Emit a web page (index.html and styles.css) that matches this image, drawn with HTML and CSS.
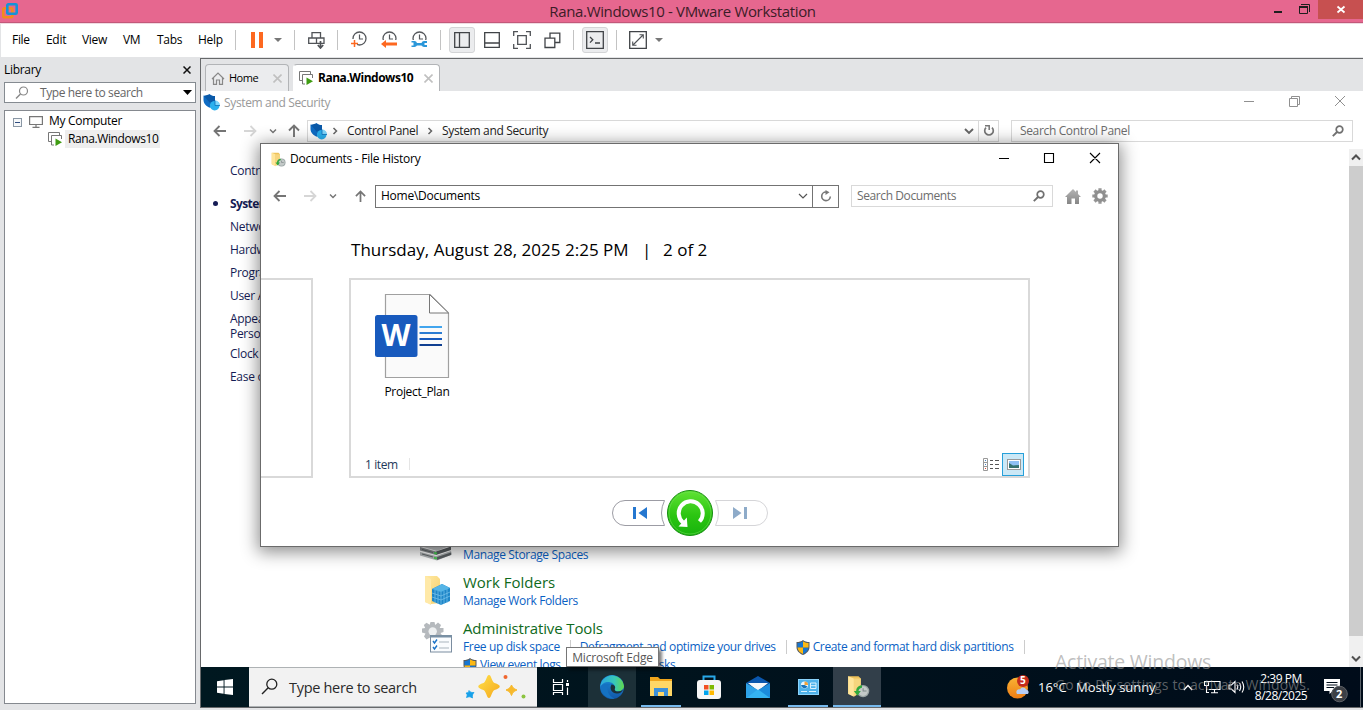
FILE: index.html
```html
<!DOCTYPE html>
<html lang="en">
<head>
<meta charset="utf-8">
<title>Rana.Windows10 - VMware Workstation</title>
<link rel="stylesheet" href="styles.css">
</head>
<body>
<svg class="defs" width="0" height="0">
  <defs>
    <linearGradient id="gGreen" x1="0" y1="0" x2="0" y2="1"><stop offset="0" stop-color="#5fe333"/><stop offset=".55" stop-color="#2cc512"/><stop offset="1" stop-color="#17b30c"/></linearGradient>
    <linearGradient id="gFolder" x1="0" y1="0" x2="1" y2="1"><stop offset="0" stop-color="#ffe9a3"/><stop offset="1" stop-color="#f7cf6a"/></linearGradient>
    <linearGradient id="gGrey" x1="0" y1="0" x2="0" y2="1"><stop offset="0" stop-color="#b4b4b4"/><stop offset="1" stop-color="#868686"/></linearGradient>
    <linearGradient id="gEdgeA" x1="0" y1="0" x2="1" y2="0"><stop offset="0" stop-color="#2aa7e0"/><stop offset=".6" stop-color="#38c8b8"/><stop offset="1" stop-color="#62d84a"/></linearGradient>
    <linearGradient id="gEdgeB" x1="0" y1="0" x2="0" y2="1"><stop offset="0" stop-color="#1b8fdc"/><stop offset="1" stop-color="#1257a8"/></linearGradient>
    <linearGradient id="gStar" x1="0" y1="0" x2="1" y2="1"><stop offset="0" stop-color="#ffe04a"/><stop offset="1" stop-color="#f5a81c"/></linearGradient>
    <linearGradient id="gSun" x1="0" y1="0" x2="0" y2="1"><stop offset="0" stop-color="#f9b233"/><stop offset="1" stop-color="#ee7d16"/></linearGradient>
    <symbol id="vmshield" viewBox="0 0 17 17"><path d="M0.500 1.500C3 2 5 1.500 6.500 0.200C8 1.500 9.500 2 12 2V7C12 10.500 9.500 12.800 7 13.800C3.500 12.500.5 9.500.5 6Z" fill="#0f6cc4"/><path d="M6.500.2C8 1.500 9.500 2 12 2V7C12 9 11 11 9.500 12L1 2Z" fill="#0a59a8"/><circle cx="11.700" cy="11.700" r="4.800" fill="#2ab0ee"/><path d="M12 11.500V6.500A5 5 0 0 1 17 11.500Z" fill="#7fd6fb"/><path d="M12 11.500H17M12 11.500V6.500" stroke="#0d6fb9" stroke-width=".8"/></symbol>
    <symbol id="uac" viewBox="0 0 14 15"><path d="M7 0C8.500 1.500 11 2 13.500 2V7C13.500 11 10.500 13.500 7 15C3.500 13.500.5 11 .5 7V2C3 2 5.500 1.500 7 0Z" fill="#555b62"/><path d="M7 1.200V7.500H1.500V3C4 3 5.500 2.400 7 1.200ZM7 7.500H12.500C12.300 10.500 10 12.700 7 14Z" fill="#1776d1"/><path d="M7 1.200C8.500 2.400 10 3 12.500 3V7.500H7ZM1.500 7.500H7V14C4 12.700 1.700 10.500 1.500 7.500Z" fill="#fdb913"/></symbol>
    <symbol id="vmpages" viewBox="0 0 14 14"><path d="M3 9.500H.5V.5H11.500V3M6 13H3.500V3.500H13.500V7" fill="none" stroke="#777"/><path d="M7.500 6.500L14 10.200L7.500 14Z" fill="#3f9c12"/></symbol>
    <symbol id="back" viewBox="0 0 14 12"><path d="M13 6H1.500M6.500 1L1.500 6L6.500 11" fill="none" stroke="currentColor" stroke-width="1.800"/></symbol>
    <symbol id="fwd" viewBox="0 0 14 12"><path d="M1 6H12.500M7.500 1L12.500 6L7.500 11" fill="none" stroke="currentColor" stroke-width="1.800"/></symbol>
    <symbol id="up" viewBox="0 0 12 14"><path d="M6 13V2M1 6.500L6 1.500L11 6.500" fill="none" stroke="currentColor" stroke-width="1.900"/></symbol>
    <symbol id="chev" viewBox="0 0 10 8"><path d="M1 2L5 6L9 2" fill="none" stroke="currentColor" stroke-width="1.900"/></symbol>
    <symbol id="crumb" viewBox="0 0 6 8"><path d="M1.500 1L4.500 4L1.500 7" fill="none" stroke="currentColor" stroke-width="1.500"/></symbol>
    <symbol id="lens" viewBox="0 0 12 12"><circle cx="7.500" cy="4.500" r="3.300" fill="none" stroke="#707070" stroke-width="1.700"/><path d="M5 7L.8 11.200" stroke="#707070" stroke-width="1.900"/></symbol>
    <symbol id="reload" viewBox="0 0 12 12"><path d="M3 2.600A4.300 4.300 0 1 0 9 2.600" fill="none" stroke="#777" stroke-width="1.700"/><path d="M2 .8H6.200V5" fill="none" stroke="#777" stroke-width="1.500"/></symbol>
    <symbol id="fhist" viewBox="0 0 20 20"><path d="M1 1H10L12 3V16L5 18L1 16Z" fill="#eec25a"/><path d="M1 1L6 3V19L1 16.500Z" fill="#ffe59a"/><path d="M6 3H12V15L6 19Z" fill="#f6d57e"/><circle cx="14" cy="14" r="5.400" fill="#9aa5a5"/><circle cx="14" cy="14" r="4.200" fill="#c3c9c8"/><path d="M14 11.500V14H17" fill="none" stroke="#7d8888" stroke-width=".9"/><path d="M13 9C9 9.500 8 12 8 14H6L9 18L12 14H10C10 12.500 11 11.500 13 11Z" fill="#2fa83c"/></symbol>
    <symbol id="tclock" viewBox="0 0 18 18"><circle cx="9.500" cy="7.500" r="6.500" fill="none" stroke="#55585c" stroke-width="1.300"/><path d="M9.500 3.500V8H13" fill="none" stroke="#55585c" stroke-width="1.200"/></symbol>
  </defs>
</svg>

<header class="titlebar">
  <svg class="logo" width="16" height="16" viewBox="0 0 16 16"><rect x="1.300" y="5.300" width="9" height="9" rx="1" fill="none" stroke="#f28c1c" stroke-width="2.600"/><rect x="5.300" y="1.300" width="9.400" height="9.400" rx="1" fill="none" stroke="#1593d6" stroke-width="2.600"/></svg>
  <span class="app-title">Rana.Windows10 - VMware Workstation</span>
  <div class="app-controls">
    <svg width="90" height="19" viewBox="0 0 90 19"><rect x="1" y="11" width="8" height="2" fill="#1e1e1e"/><path d="M26.500 7V13.500H34.500V6.500M28 4.500H36.500V12" fill="none" stroke="#1e1e1e"/><rect x="26" y="6" width="9" height="2" fill="#1e1e1e"/><rect x="45" width="45" height="19" fill="#c75050"/><path d="M64.500 6.500L71.500 12.500M71.500 6.500L64.500 12.500" stroke="#fff" stroke-width="1.800"/></svg>
  </div>
</header>

<nav class="menubar">
  <span>File</span><span>Edit</span><span>View</span><span>VM</span><span>Tabs</span><span>Help</span>
  <div class="toolbar">
    <i class="sep first"></i>
    <svg width="12" height="16"><path d="M0 0H4V16H0ZM8 0H12V16H8Z" fill="#fd6820"/></svg>
    <svg width="8" height="4"><path d="M0 0H8L4 4Z" fill="#777"/></svg>
    <i class="sep"></i>
    <svg width="17" height="17" viewBox="0 0 17 17"><path d="M4 .7H12.500V6H4ZM.7 6H8.500V11.300H.7ZM8.500 6H16V11.300H8.500Z" fill="none" stroke="#505357" stroke-width="1.300"/><path d="M12.500 9V16M9.800 13L12.500 16L15.200 13" fill="none" stroke="#505357" stroke-width="1.700"/></svg>
    <i class="sep"></i>
    <svg width="18" height="18"><use href="#tclock"/><rect x="0" y="8" width="7" height="8" fill="#fff"/><path d="M4.500 9V16M1 12.500H8" stroke="#fd6820" stroke-width="1.500"/></svg>
    <svg width="18" height="18"><use href="#tclock"/><rect x="0" y="9" width="18" height="8" fill="#fff"/><path d="M1 13L6 9V11.500H17V14.500H6V17Z" fill="#fd6820"/></svg>
    <svg width="18" height="18"><use href="#tclock"/><rect x="0" y="9" width="18" height="8" fill="#fff"/><path d="M1.500 10H4.500A3 3 0 0 1 7 12H11.500A3 3 0 0 1 14 10H17V12H14.500V14H17V16H14A3 3 0 0 1 11.500 14.500H7A3 3 0 0 1 4.500 16H1.500V14.500H3.500V11.500H1.500Z" fill="#2b97d9"/></svg>
    <i class="sep"></i>
    <span class="pressed"><svg width="16" height="16"><path d="M.7.700H15.300V15.300H.7ZM5.500.7V15.300" fill="none" stroke="#404347" stroke-width="1.300"/></svg></span>
    <svg width="16" height="16"><path d="M.7.700H15.300V15.300H.7ZM.7 11H15.300" fill="none" stroke="#404347" stroke-width="1.300"/></svg>
    <svg width="18" height="18"><path d="M.7 5V.7H5M13 .7H17.300V5M17.300 13V17.300H13M5 17.300H.7V13M4.700 4.700H13.300V13.300H4.700Z" fill="none" stroke="#505357" stroke-width="1.300"/></svg>
    <svg width="17" height="17"><path d="M6 6V1.200H15.800V10.500H11M1 6.200H10.800V15.500H1Z" fill="none" stroke="#404347" stroke-width="1.300"/></svg>
    <i class="sep"></i>
    <span class="pressed"><svg width="18" height="18"><path d="M.7.700H17.300V17.300H.7Z" fill="none" stroke="#404347" stroke-width="1.300"/><path d="M4 6L6.800 8.800L4 11.600M9 12H14" fill="none" stroke="#404347" stroke-width="1.300"/></svg></span>
    <i class="sep"></i>
    <svg width="18" height="18"><path d="M.7.700H17.300V17.300H.7Z" fill="none" stroke="#404347" stroke-width="1.300"/><path d="M10.500 3.700H14.300V7.500M3.700 10.500V14.300H7.500M14 4L4 14" fill="none" stroke="#505357" stroke-width="1.100"/></svg>
    <svg width="8" height="4"><path d="M0 0H8L4 4Z" fill="#777"/></svg>
  </div>
</nav>

<div class="workspace">
  <aside class="library">
    <div class="lib-head"><span>Library</span><svg width="8" height="8"><path d="M.5.500L7.500 7.500M7.500.5L.5 7.500" stroke="#111" stroke-width="1.500"/></svg></div>
    <div class="lib-search"><svg width="14" height="14"><circle cx="8.500" cy="5" r="4" fill="none" stroke="#888" stroke-width="1.200"/><path d="M5.500 8L1 12.500" stroke="#888" stroke-width="1.400"/></svg><span>Type here to search</span><svg width="9" height="5"><path d="M0 0H9L4.500 5Z" fill="#000"/></svg></div>
    <div class="tree">
      <div class="node root"><svg width="9" height="9"><rect x=".5" y=".5" width="8" height="8" fill="#f5f7f9" stroke="#8a97a5"/><path d="M2 4.500H7" stroke="#2f4c80"/></svg><svg width="14" height="12"><path d="M.6.600H13.400V8.500H.6ZM7 8.500V11M3.500 11.300H10.500" fill="none" stroke="#777" stroke-width="1.200"/></svg><span>My Computer</span></div>
      <div class="node child"><svg width="14" height="14"><use href="#vmpages"/></svg><span class="picked">Rana.Windows10</span></div>
    </div>
  </aside>

  <section class="vm">
    <div class="tabs">
      <div class="tab home"><svg width="14" height="13"><path d="M1 7L7 1L13 7M2.500 6V12.300H5.500V8H8.500V12.300H11.500V6" fill="none" stroke="#888" stroke-width="1.200"/></svg><span>Home</span><svg width="9" height="9"><path d="M.5.500L8.500 8.500M8.500.5L.5 8.500" stroke="#c0c0c0" stroke-width="1.600"/></svg></div>
      <div class="tab current"><svg width="14" height="14"><use href="#vmpages"/></svg><span>Rana.Windows10</span><svg width="9" height="9"><path d="M.5.500L8.500 8.500M8.500.5L.5 8.500" stroke="#c0c0c0" stroke-width="1.600"/></svg></div>
    </div>

    <div class="guest">
      <div class="cp-title"><svg width="17" height="17"><use href="#vmshield"/></svg><span>System and Security</span>
        <svg class="cp-controls" width="104" height="12"><path d="M0 6.500H10M45.500 3.500H53.500V11.500H45.500ZM47.500 3V1.500H55.500V9.500H54M91 1L101 11M101 1L91 11" fill="none" stroke="#909090"/></svg>
      </div>
      <div class="cp-address">
        <div class="arrows"><svg width="14" height="12"><use href="#back"/></svg><svg class="dim" width="14" height="12"><use href="#fwd"/></svg><svg width="8" height="6"><use href="#chev"/></svg><svg width="12" height="14"><use href="#up"/></svg></div>
        <div class="cp-path"><svg width="17" height="17"><use href="#vmshield"/></svg><svg width="6" height="8"><use href="#crumb"/></svg><span class="p1">Control Panel</span><svg width="6" height="8"><use href="#crumb"/></svg><span class="p2">System and Security</span><svg class="drop" width="10" height="8"><use href="#chev"/></svg></div>
        <div class="cp-reload"><svg width="12" height="12"><use href="#reload"/></svg></div>
        <div class="cp-search"><span>Search Control Panel</span><svg width="12" height="12"><use href="#lens"/></svg></div>
      </div>
      <div class="cp-body">
        <ul class="cp-nav">
          <li class="top">Control Panel Home</li>
          <li class="here">System and Security</li>
          <li>Network and Internet</li>
          <li>Hardware and Sound</li>
          <li>Programs</li>
          <li>User Accounts</li>
          <li class="two">Appearance and<br>Personalization</li>
          <li>Clock and Region</li>
          <li>Ease of Access</li>
        </ul>
        <div class="cp-main">
          <div class="cat storage">
            <svg width="32" height="20" viewBox="0 0 32 20"><path d="M0 5L14 0L32 4L17 10Z" fill="#c3c6c8"/><path d="M0 6L16 10.500V14L0 9.500Z" fill="#8d9194"/><path d="M16 10.500L31 5.500V9L16 14Z" fill="#5a5f62"/><path d="M0 11L16 15L31 10L32 13.500L17 19.500L0 14.500Z" fill="#b1b5b7"/><path d="M17 16L31 11.500V14L17 19Z" fill="#5b6063"/><path d="M2 13L13 16M2 8.500L13 11.500" stroke="#63686b"/><path d="M14 12L17 12.500M14 16.800L17 17.500" stroke="#47c952" stroke-width="2"/></svg>
            <div><a>Manage Storage Spaces</a></div>
          </div>
          <div class="cat work">
            <svg width="28" height="32" viewBox="0 0 28 32"><path d="M1 1H13L16 4V28L7 29L1 27Z" fill="url(#gFolder)"/><path d="M1 1L7 4V30L1 27Z" fill="#ffe9a8"/><path d="M8 14L18 9L26 13V26L17 30L8 26Z" fill="#1e86c8"/><path d="M8 14L18 9L26 13L17 17Z" fill="#55b4e6"/><path d="M8 18L17 21L26 17M8 22L17 25L26 21M11 15V28M14 16V29M17 17V30M20 16V29M23 14V28" stroke="#7cc6ee" stroke-width=".7" fill="none"/></svg>
            <div><h3>Work Folders</h3><a>Manage Work Folders</a></div>
          </div>
          <div class="cat admin">
            <svg width="32" height="32" viewBox="0 0 32 32"><path d="M9.500 1H13.500L14.200 4L17 1.500L20 4L18.700 7H22.500V11L19.500 12L21.500 15L19 18L15.500 16.500L14.500 20H10L9 16.500L5.500 18.500L3 15.500L4.500 12.500L1 11.500V7.500L4.200 7L2.800 4L5.500 1.700L8.700 3.800Z" fill="#b5b9bd"/><circle cx="11.700" cy="10.500" r="4.200" fill="#eef0f1"/><rect x="9.500" y="14.500" width="21" height="16.500" fill="#fafcfe" stroke="#7b8da0"/><path d="M9 15.500H31" stroke="#7990a5" stroke-width="2"/><path d="M12 20L13.500 22L16 18.500M12 26L13.500 28L16 24.500" fill="none" stroke="#1b73c8" stroke-width="1.400"/><path d="M18 21H28M18 27H28" stroke="#a9b4bd"/></svg>
            <div><h3 class="long">Administrative Tools</h3>
              <p class="links"><a>Free up disk space</a><i></i><a>Defragment and optimize your drives</a><i></i><svg width="14" height="15"><use href="#uac"/></svg><a>Create and format hard disk partitions</a><i></i></p>
              <p class="links"><svg width="14" height="15"><use href="#uac"/></svg><a>View event logs</a><i></i><svg width="14" height="15"><use href="#uac"/></svg><a>Schedule tasks</a></p>
            </div>
          </div>
        </div>
        <div class="scroll"><svg width="14" height="17"><path d="M3 10.500L7 6.500L11 10.500" fill="none" stroke="#505050" stroke-width="2"/></svg><div class="thumb"></div><svg width="14" height="17"><path d="M3 6.500L7 10.500L11 6.500" fill="none" stroke="#505050" stroke-width="2"/></svg></div>
      </div>

      <div class="taskbar">
        <div class="start"><svg width="16" height="16"><path d="M0 2.200L6.600 1.200V7.500H0ZM7.500 1.100L16 0V7.500H7.500ZM0 8.500H6.600V14.800L0 13.800ZM7.500 8.500H16V16L7.500 14.900Z" fill="#fff"/></svg></div>
        <div class="tb-search">
          <svg width="18" height="18"><circle cx="10.800" cy="6.200" r="5" fill="none" stroke="#222" stroke-width="1.300"/><path d="M7.200 9.800L1 16" stroke="#222" stroke-width="1.400"/></svg><span>Type here to search</span>
          <svg width="62" height="28" viewBox="0 0 62 28"><path d="M24 2C26.500 2 26.500 8.500 29.500 10C36.500 12 36.500 15 29.500 17C26.500 18.500 26.500 25 24 25C21.500 25 21.500 18.500 18.500 17C11.500 15 11.500 12 18.500 10C21.500 8.500 21.500 2 24 2Z" fill="url(#gStar)"/><path d="M46.500 12C48 15 48.500 15.500 52 17C48.500 18.500 48 19 46.500 22.500C45 19 44.500 18.500 41 17C44.500 15.500 45 15 46.500 12Z" fill="#f7b92c" stroke="#f7b92c"/><path d="M4 17.500C5.500 19.500 6 19.500 9 19.500C7.500 21.500 7 22 7.500 25C5 23.500 4 23.500 1.500 24.500C2.500 22 2.500 21.500 1 20C3.500 19.800 3.500 19.500 4 17.500Z" fill="#17a1ea" stroke="#17a1ea" stroke-width=".8"/><circle cx="40.500" cy="4" r="2" fill="#f0662e"/><circle cx="58.500" cy="23.500" r="2" fill="#8bc43f"/></svg>
        </div>
        <div class="tview"><svg width="18" height="16"><path d="M1.500 0V3.500H10.500V0M1.500 5.500H10.500V11.500H1.500ZM1.500 16V13.500H10.500V16M15.500 1V3M15.500 8.500V16" fill="none" stroke="#fff" stroke-width="1.200"/><rect x="14" y="4" width="3" height="3" fill="#fff"/></svg></div>
        <div class="task hot"><svg width="24" height="24" viewBox="0 0 24 24"><circle cx="12" cy="12" r="12" fill="url(#gEdgeB)"/><path d="M1 8A12 12 0 0 1 24 11C24 15 20 17 16 16C14 15.500 14.500 14 15 13C15.500 9 11 6.500 7 7C4 7.500 2 9 .3 12Z" fill="url(#gEdgeA)"/><path d="M15.200 13C14 14.500 14.800 16.500 18 16.500C20 16.500 22 15.500 23 14.500C22 17 20 18.500 17 18.500C12 18.500 9 14 11.500 9.500C13.500 9.500 15.500 11 15.200 13Z" fill="#1c3038"/><path d="M9 10C6 14 8 21 14.500 23.500C8 25 1 19 .3 12C2 8.500 8 8 11.500 9.500Z" fill="#1572c2"/></svg></div>
        <div class="task open"><svg width="22" height="20" viewBox="0 0 22 20"><path d="M0 0H8L10 2H22V19H0Z" fill="#f0a51c"/><path d="M0 4H22V19H0Z" fill="#ffd766"/><path d="M4 11H18V19H14V15H8V19H4Z" fill="#3d90d8"/></svg></div>
        <div class="task store"><svg width="24" height="24" viewBox="0 0 24 24"><path d="M6.500 7V1.500H17.500V7" fill="none" stroke="#28a8e8" stroke-width="2"/><rect y="5" width="24" height="19" rx="3" fill="#f6f6f6"/><path d="M7 10H11.500V14.500H7Z" fill="#f25022"/><path d="M12.500 10H17V14.500H12.500Z" fill="#7fba00"/><path d="M7 15.500H11.500V20H7Z" fill="#00a4ef"/><path d="M12.500 15.500H17V20H12.500Z" fill="#ffb900"/></svg></div>
        <div class="task mail"><svg width="24" height="22" viewBox="0 0 24 22"><path d="M0 7L12 0L24 7L12 14Z" fill="#0a57ae"/><path d="M2 7H22L12 15Z" fill="#f5f8fb"/><path d="M0 7L12 14L24 22H0Z" fill="#2ea2e8"/><path d="M24 7V22H0L12 14Z" fill="#1b8bdc"/><path d="M0 22L11 14H13L24 22Z" fill="#35b3f2"/></svg></div>
        <div class="task open cp"><svg width="21" height="16" viewBox="0 0 21 16"><rect x=".5" y=".5" width="20" height="15" fill="#4fb2ea" stroke="#8ad3fb"/><circle cx="6.500" cy="6" r="3.600" fill="#e9f6fd"/><path d="M6.500 6V2.400A3.600 3.600 0 0 1 10.100 6Z" fill="#f2a23a"/><path d="M3 6A3.500 3.500 0 0 0 9.500 7.500L6.500 6Z" fill="#1674bd"/><path d="M12.500 4H18V9.500H12.500ZM13 6.700H18M3 12.500H9M11 12.500H18" fill="none" stroke="#d9f1fe" stroke-width="1"/></svg></div>
        <div class="task active"><svg width="23" height="23"><use href="#fhist"/></svg></div>
        <div class="weather"><svg width="24" height="24" viewBox="0 0 24 24"><circle cx="10.500" cy="13" r="10.500" fill="url(#gSun)"/><path d="M10 19C8 16 11 13.500 13 14.500C14 11.500 18.500 12 19 14.500C22 14.500 22.500 19 20 19Z" fill="#b5cdf5"/><circle cx="16" cy="6" r="6" fill="#c42b1c"/></svg><b>5</b><span class="deg">16°C</span><span class="sky">Mostly sunny</span></div>
        <div class="tray">
          <svg width="10" height="7"><path d="M.8 6L5 1.500L9.200 6" fill="none" stroke="#fff" stroke-width="1.300"/></svg>
          <svg width="17" height="14"><path d="M4.500 1.500H16V9.500H5M10.500 9.500V12.500M7 12.800H14M.5 1.500H4.500V5.500H.5ZM2.500 5.500V12.500H5" fill="none" stroke="#fff" stroke-width="1.100"/></svg>
          <svg width="17" height="14"><path d="M1 5H3.500L7 1.500V12.500L3.500 9H1ZM9 4.500Q10.500 7 9 9.500M11.500 3Q14 7 11.500 11M14 1.500Q17.500 7 14 12.500" fill="none" stroke="#fff" stroke-width="1.100"/></svg>
        </div>
        <div class="clock"><span>2:39 PM</span><span>8/28/2025</span></div>
        <div class="notes"><svg width="25" height="24"><path d="M0 0H16V12H9L5.500 15V12H0Z" fill="#fff"/><path d="M2.500 3.500H13.500M2.500 6H13.500M2.500 8.500H10" stroke="#000d1a" stroke-width="1.100"/><circle cx="15.500" cy="15" r="7.800" fill="#3c4046" stroke="#5c6066"/></svg><b>2</b></div>
        <i class="peek"></i>
      </div>

      <div class="dialog">
        <div class="dl-title"><svg width="15" height="15"><use href="#fhist"/></svg><span>Documents - File History</span>
          <svg class="dl-controls" width="104" height="12"><path d="M0 6.500H10M45.500 1.500H54.500V10.500H45.500ZM91 1L101 11M101 1L91 11" fill="none" stroke="#000" stroke-width="1.100"/></svg></div>
        <div class="dl-address">
          <div class="arrows"><svg width="14" height="12"><use href="#back"/></svg><svg class="dim" width="14" height="12"><use href="#fwd"/></svg><svg width="8" height="6"><use href="#chev"/></svg><svg width="11" height="13"><use href="#up"/></svg></div>
          <div class="dl-path"><span>Home\Documents</span><svg width="10" height="8"><path d="M1 2L5 6L9 2" fill="none" stroke="#555" stroke-width="1.200"/></svg></div>
          <div class="dl-reload"><svg width="12" height="12" viewBox="0 0 12 12"><path d="M6 2A4.300 4.300 0 1 0 10.300 6.500" fill="none" stroke="#777" stroke-width="1.600"/><path d="M5.500 0L9.500 2.300L5.500 5Z" fill="#777"/></svg></div>
          <div class="dl-search"><span>Search Documents</span><svg width="12" height="12"><use href="#lens"/></svg></div>
          <svg width="16" height="15" viewBox="0 0 16 15"><path d="M8 0L11 3V1.500H13V5L16 8H14V15H10V9.500H6.500V15H2V8H0Z" fill="url(#gGrey)"/></svg>
          <svg width="16" height="16" viewBox="0 0 16 16"><path d="M8 .3V15.700M.3 8H15.700M2.500 2.500L13.500 13.500M13.500 2.500L2.500 13.500" stroke="#969696" stroke-width="3.200"/><circle cx="8" cy="8" r="4.400" fill="none" stroke="#8f8f8f" stroke-width="3"/><circle cx="8" cy="8" r="2.700" fill="#fff"/></svg>
        </div>
        <div class="dl-date"><span class="d1">Thursday, August 28, 2025 2:25 PM</span><span class="bar">|</span><span class="d2">2 of 2</span></div>
        <div class="dl-panels">
          <div class="prev"></div>
          <div class="snapshot">
            <div class="file">
              <div class="doc"><svg width="75" height="84" viewBox="0 0 75 84"><path d="M10.500.5H55L73.500 19V83.500H10.500Z" fill="#fafafa" stroke="#a0a0a0" stroke-width="1.200"/><path d="M54.500.5V19H73.500Z" fill="#fff" stroke="#777"/><rect y="21" width="42.500" height="42" rx="2.500" fill="#185abd"/><path d="M44.500 33H67" stroke="#41a5ee" stroke-width="2"/><path d="M44.500 39H67" stroke="#2b7cd3" stroke-width="2"/><path d="M44.500 45H67" stroke="#185abd" stroke-width="2"/><path d="M44.500 51H67" stroke="#103f91" stroke-width="2"/></svg><b>W</b></div>
              <span>Project_Plan</span>
            </div>
            <div class="status"><span>1 item</span><i></i>
              <svg class="list" width="17" height="13"><path d="M.5.500H4.500V12.500H.5ZM.5 4.500H4.500M.5 8.500H4.500" fill="none" stroke="#999"/><path d="M7 2.500H10M12 2.500H16M7 6.500H10M12 6.500H16M7 10.500H10M12 10.500H16" stroke="#555"/><path d="M2 2.500H3M2 6.500H3" stroke="#4b82c0"/><path d="M2 10.500H3" stroke="#d43"/></svg>
              <div class="thumbs"><svg width="14" height="11"><rect x=".5" y=".5" width="13" height="10" fill="#fff" stroke="#999"/><rect x="2" y="2" width="10" height="7" fill="#8fc1f4"/><path d="M2 4L6 6.500L12 6V9H2Z" fill="#36736f"/></svg></div>
            </div>
          </div>
        </div>
        <div class="player"><svg width="156" height="46" viewBox="0 0 156 46"><path d="M52.500 10.500H13A12.500 12.500 0 0 0 13 35.500H52.500Q46.500 23 52.500 10.500Z" fill="#fff" stroke="#9c9ca4"/><path d="M103.500 10.500H143A12.500 12.500 0 0 1 143 35.500H103.500Q109.500 23 103.500 10.500Z" fill="#fff" stroke="#d5d5d8"/><path d="M21 17H24V29H21ZM35 17V29L26.500 23Z" fill="#2577d0"/><path d="M121 17V29L129.500 23ZM132 17H135V29H132Z" fill="#8eabc9"/><circle cx="78" cy="23" r="22.500" fill="url(#gGreen)" stroke="#168d10"/><circle cx="78" cy="23" r="21" fill="none" stroke="#6fdf55" stroke-opacity=".55"/><path d="M87.500 31.500A12 12 0 1 0 71 32.500" fill="none" stroke="#fff" stroke-width="4"/><path d="M66.500 36.500L75.500 37L74.800 27.500Z" fill="#fff"/></svg></div>
      </div>

      <div class="tooltip">Microsoft Edge</div>
      <div class="watermark"><p class="wm1">Activate Windows</p><p class="wm2">Go to PC settings to activate Windows.</p></div>
    </div>
  </section>
</div>
</body>
</html>
```
FILE: styles.css
```css
* { box-sizing: border-box; }
body { margin: 0; width: 1363px; height: 710px; overflow: hidden; display: flex; flex-direction: column; background: #e3e4e6; color: #000; font: 12px/16px "Open Sans", "Noto Sans", sans-serif; letter-spacing: -0.3px; }
svg { display: block; flex: none; }
span, a, h3, p { white-space: nowrap; }
p, h3, ul { margin: 0; padding: 0; }
.defs { position: absolute; }

.titlebar { height: 24px; flex: none; display: grid; grid-template-columns: 274px 1fr 272px; background: #e6678f; border-bottom: 1px solid #f0dbe2; box-shadow: inset 0 -1px #c2587a; }
.logo { margin: 3px 0 0 2px; }
.app-title { text-align: center; font-size: 15px; line-height: 23px; color: #3c1c27; letter-spacing: -0.35px; }
.app-controls { justify-self: end; }

.menubar { height: 34px; flex: none; margin-left: 1px; padding-left: 11px; display: grid; grid-template-columns: 34px 36px 41px 34px 41px 37px 1fr; align-items: center; background: #fff; border-bottom: 1px solid #e3e4e6; padding-bottom: 1px; }
.toolbar { display: grid; height: 32px; align-items: center; justify-items: center; grid-template-columns: 9px 26px 16px 17px 26px 17px 26px 34px 26px 17px 26px 34px 26px 34px 9px 34px 9px 34px 8px; }
.sep { width: 1px; height: 20px; background: #c3c3c3; }
.sep.first { justify-self: start; }
.pressed { width: 26px; height: 26px; display: grid; place-items: center; background: #ebecee; border: 1px solid #d3d4d6; border-radius: 3px; }

.workspace { flex: 1; display: grid; grid-template-columns: 200px 1fr; }
.library { padding: 4px 4px 6px 4px; display: flex; flex-direction: column; }
.lib-head { height: 19px; display: flex; justify-content: space-between; padding-right: 5px; line-height: 16px; }
.lib-head svg { margin-top: 4px; }
.lib-search { height: 21px; display: flex; align-items: center; border: 1px solid #858b91; background: #fff; margin-top: 1px; padding: 0 3px 0 10px; color: #666; letter-spacing: -0.4px; }
.lib-search span { margin-left: 11px; flex: 1; }
.tree { flex: 1; margin-top: 7px; border: 1px solid #85898f; background: #fff; padding: 1px 0 0 8px; }
.node { height: 18px; display: flex; align-items: center; }
.root svg { margin-top: 2px; }
.root svg + svg { margin: 1px 6px 0 7px; }
.child { padding-left: 35px; }
.picked { margin-left: 3px; padding: 1px 2px 1px 3px; background: #eee; letter-spacing: -0.4px; }

.vm { border: 1px solid #67696b; border-right: 0; height: 650px; display: flex; flex-direction: column; }
.tabs { height: 32px; flex: none; display: flex; align-items: flex-end; padding-left: 4px; gap: 4px; background: #e3e4e6; }
.tab { height: 27px; display: flex; align-items: center; border: 1px solid #b2b4b7; border-bottom: 0; border-radius: 4px 4px 0 0; }
.tab.home { width: 84px; padding: 0 6px 0 5px; background: #ebecee; font-size: 11px; letter-spacing: -0.5px; }
.tab.home span { margin: 0 auto 0 4px; }
.tab.current { width: 147px; padding: 0 6px 0 5px; background: #fff; font-weight: 700; border-left-color: #fff; letter-spacing: -0.48px; }
.tab.current span { margin: 0 auto 0 5px; }

.guest { position: relative; flex: 1; background: #fff; overflow: hidden; }
.cp-title { height: 25px; display: flex; align-items: center; padding: 0 15px 3px 2px; color: #999; letter-spacing: -0.35px; }
.cp-title span { margin: 2px 0 0 4px; }
.cp-controls { margin-left: auto; margin-top: -3px; }
.cp-address { height: 30px; display: flex; align-items: center; padding-left: 12px; }
.arrows { display: grid; align-items: center; justify-items: center; color: #757575; }
.arrows .dim { color: #d6d6d6; }
.cp-address .arrows { grid-template-columns: 14px 46px 0 42px; width: 94px; }
.cp-address .arrows svg:nth-child(4) { margin-left: -1px; }
.cp-path { width: 672px; height: 22px; border: 1px solid #d9d9d9; display: flex; align-items: center; color: #222; padding-left: 2px; letter-spacing: -0.35px; }
.cp-path svg + svg { margin-left: 5px; color: #666; }
.cp-path .p1 { margin-left: 9px; width: 75px; }
.cp-path .p1 + svg { margin-left: 5px; color: #666; }
.cp-path .p2 { margin-left: 9px; }
.cp-path .drop { margin-left: auto; margin-right: 4px; color: #666; }
.cp-reload { width: 21px; height: 22px; margin-left: -1px; border: 1px solid #d9d9d9; display: grid; place-items: center; }
.cp-search { margin-left: 12px; width: 342px; height: 22px; border: 1px solid #d9d9d9; display: flex; align-items: center; justify-content: space-between; padding: 0 8px; color: #6d6d6d; letter-spacing: -0.35px; }
.cp-body { height: 521px; padding-top: 3px; display: grid; grid-template-columns: 219px 1fr 14px; }
.cp-nav { list-style: none; color: #151c55; padding-left: 29px; }
.cp-nav li { height: 23px; line-height: 23px; white-space: nowrap; }
.cp-nav .top { height: 33px; padding-top: 10px; margin-bottom: 10px; }
.cp-nav .here { font-weight: 700; letter-spacing: -0.6px; position: relative; }
.cp-nav .here::before { content: ""; position: absolute; left: -17px; top: 9px; width: 5px; height: 5px; border-radius: 50%; background: #151c55; }
.cp-nav .two { height: 35px; line-height: 15px; padding-top: 4px; }
.cp-main { padding-top: 392px; height: 518px; overflow: hidden; }
.cat { display: grid; grid-template-columns: 43px 1fr; color: #0a5fc4; letter-spacing: -0.36px; }
.cat h3 { font-size: 15px; line-height: 20px; font-weight: 400; color: #0f6a1c; letter-spacing: 0; }
.cat h3.long { letter-spacing: -0.13px; }
.cat a { display: block; line-height: 16px; }
.storage { height: 31px; }
.storage a { margin-top: 6px; }
.work { height: 46px; }
.work a { margin-top: 1px; }
.work > svg { margin: 3px 0 0 4px; }
.admin > svg { margin: 3px 0 0 1px; }
.links { display: flex; align-items: center; height: 18px; }
.links i { width: 1px; height: 14px; background: #ccc; margin: 0 9px 0 10px; }
.links svg + a { margin-left: 3px; }
.scroll { background: #f0f0f0; display: flex; flex-direction: column; }
.thumb { height: 470px; background: #cdcdcd; margin-bottom: 14px; }

.taskbar { height: 40px; display: flex; align-items: center; color: #fff; background: linear-gradient(90deg, #001820 0%, #00131d 40%, #000c1a 100%); position: relative; }
.taskbar > div { height: 40px; flex: none; display: flex; align-items: center; justify-content: center; }
.taskbar > .start { width: 48px; }
.taskbar > .tb-search { width: 288px; background: #f2f2f2; border: 1px solid #aeb2b4; border-width: 1px 0; color: #2b2b2b; font-size: 14.500px; justify-content: flex-start; padding-left: 12px; letter-spacing: -0.3px; }
.tb-search span { margin: 1px auto 0 10px; }
.tb-search svg:last-child { margin-right: 10px; }
.taskbar > .tview { width: 51px; padding-right: 3px; }
.taskbar > .task { width: 48px; border-bottom: 2px solid transparent; padding-top: 1px; }
.taskbar > .hot { background: #1c3038; border-color: #1c3038; }
.taskbar > .open { width: 40px; margin: 0 4px 0 5px; border-color: #76b9ed; }
.taskbar > .store { width: 48px; }
.taskbar > .mail { width: 50px; }
.taskbar > .cp { margin: 0 5px; }
.taskbar > .active { background: #323f4a; border-color: #76b9ed; padding-left: 3px; }
.taskbar > .weather { margin-left: 126px; width: 160px; justify-content: flex-start; position: relative; font-size: 13px; letter-spacing: -0.05px; }
.weather b { position: absolute; left: 13px; top: 5px; font-size: 10px; letter-spacing: 0; }
.weather .deg { margin-left: 7px; width: 38px; letter-spacing: 0; }
.taskbar > .tray { width: 74px; gap: 7px; padding-left: 16px; justify-content: flex-start; }
.tray svg:first-child { margin-right: 4px; }
.tray svg:nth-child(2) { margin-right: 0; }
.taskbar > .clock { width: 80px; flex-direction: column; padding-bottom: 1px; }
.clock span { line-height: 17px; letter-spacing: -0.5px; }
.taskbar > .notes { width: 30px; position: relative; justify-content: flex-start; margin-left: 3px; padding-top: 7px; }
.notes b { position: absolute; left: 12px; top: 19px; font-size: 11px; }
.peek { position: absolute; right: 2px; top: 0; width: 1px; height: 40px; background: #596169; }

.dialog { position: absolute; left: 59px; top: 52px; width: 859px; height: 404px; background: #fff; border: 1px solid #6b6b6b; box-shadow: 0 3px 16px 2px rgba(0,0,0,.45); display: flex; flex-direction: column; }
.dl-title { height: 30px; display: flex; align-items: center; padding: 0 15px 0 10px; letter-spacing: -0.25px; }
.dl-title span { margin-left: 4px; }
.dl-controls { margin-left: auto; margin-top: -2px; }
.dl-address { height: 44px; display: flex; align-items: center; padding-left: 12px; }
.dl-address .arrows { grid-template-columns: 14px 46px 0 56px; width: 102px; }
.dl-address .arrows svg:nth-child(4) { margin-left: -1px; }
.dl-path { width: 438px; height: 23px; border: 1px solid #737373; display: flex; align-items: center; justify-content: space-between; padding: 0 4px 0 5px; letter-spacing: -0.25px; }
.dl-path span { margin-top: -1px; }
.dl-reload { width: 27px; height: 23px; border: 1px solid #737373; margin-left: -1px; display: grid; place-items: center; }
.dl-search { width: 202px; height: 22px; margin: 0 12px; border: 1px solid #d9d9d9; display: flex; align-items: center; justify-content: space-between; padding: 0 7px 0 5px; color: #6d6d6d; letter-spacing: -0.4px; }
.dl-address > svg + svg { margin-left: 11px; }
.dl-date { height: 60px; padding: 20px 0 0 90px; display: flex; font-size: 17px; line-height: 24px; letter-spacing: 0.02px; }
.dl-date .d1 { width: 291px; }
.dl-date .bar { width: 21px; }
.dl-panels { height: 200px; display: grid; grid-template-columns: 52px 681px; column-gap: 36px; }
.prev { border: 2px solid #d9d9d9; border-left: 0; }
.snapshot { border: 2px solid #d9d9d9; display: flex; flex-direction: column; justify-content: space-between; padding: 14px 4px 0 14px; }
.file { width: 104px; display: flex; flex-direction: column; align-items: center; }
.doc { position: relative; margin-right: 2px; align-self: flex-start; margin-left: 10px; }
.doc b { position: absolute; left: 0; top: 20px; width: 42px; text-align: center; font-size: 30px; line-height: 42px; color: #fff; letter-spacing: 0; }
.file span { margin-top: 6px; }
.status { display: flex; align-items: center; height: 24px; color: #1e395b; letter-spacing: -0.4px; }
.status span { margin-top: 2px; }
.status i { width: 1px; height: 12px; margin-left: 11px; background: #e5e5e5; }
.status .list { margin-left: auto; margin-right: 2px; }
.thumbs { width: 22px; height: 23px; border: 1px solid #26a0da; background: #cbe8f6; display: grid; place-items: center; padding-left: 1px; }
.player { margin: 12px 0 0 351px; }

.tooltip { position: absolute; left: 365px; top: 556px; width: 93px; height: 20px; border: 1px solid #767676; background: #fff; color: #575757; text-align: center; line-height: 19px; letter-spacing: -0.2px; box-shadow: 3px 3px 3px rgba(0,0,0,.5); }
.watermark { position: absolute; left: 854px; top: 557px; color: rgba(150,150,150,.62); }
.wm1 { font-size: 19.500px; line-height: 27px; letter-spacing: -0.25px; }
.wm2 { font-size: 14px; line-height: 20px; letter-spacing: 0.15px; }
```
